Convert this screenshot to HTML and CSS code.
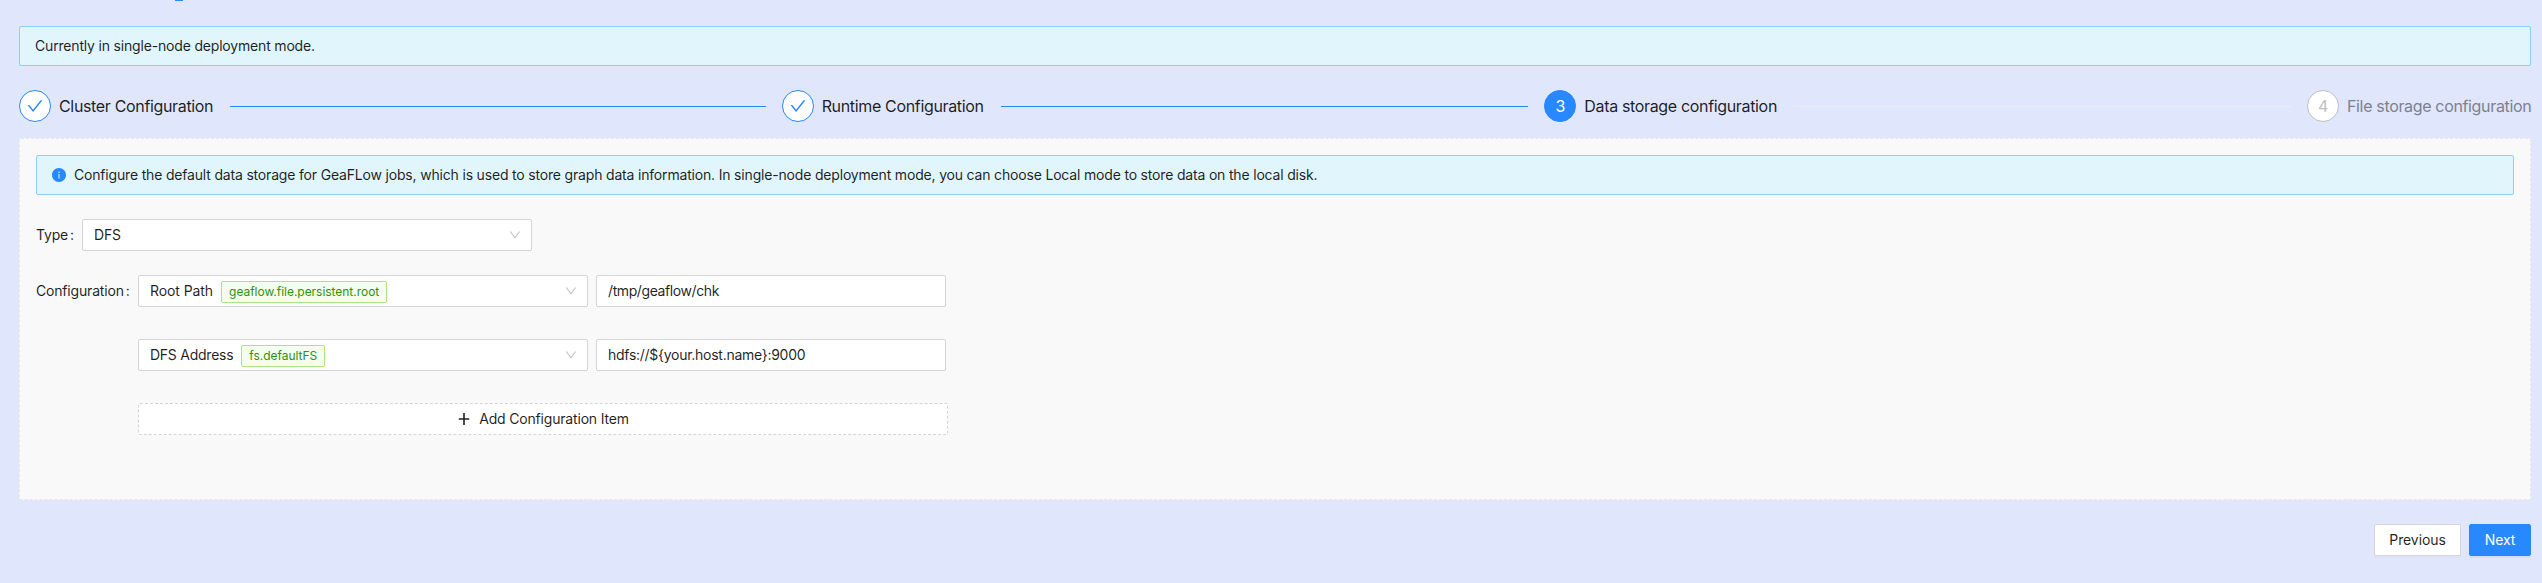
FILE: index.html
```html
<!DOCTYPE html>
<html lang="en">
<head>
<meta charset="utf-8">
<title>Cluster setup</title>
<link rel="stylesheet" href="styles.css">
</head>
<body>
<main class="page">
  <span class="accent"></span>
  <div class="alert"><span class="t-mode">Currently in single-node deployment mode.</span></div>

  <ol class="steps">
    <li class="step done">
      <span class="step-icon"><svg viewBox="64 64 896 896" width="16" height="16" fill="currentColor"><path d="M912 190h-69.900c-9.800 0-19.100 4.500-25.100 12.200L404.700 724.500 207 474a32 32 0 00-25.100-12.200H112c-6.700 0-10.400 7.700-6.300 12.900l273.900 347c12.800 16.200 37.400 16.200 50.300 0l488.400-618.900c4.100-5.100.4-12.800-6.300-12.800z"/></svg></span>
      <span class="step-title t-cluster">Cluster Configuration</span><span class="step-line"></span>
    </li>
    <li class="step done">
      <span class="step-icon"><svg viewBox="64 64 896 896" width="16" height="16" fill="currentColor"><path d="M912 190h-69.900c-9.800 0-19.100 4.500-25.100 12.200L404.700 724.500 207 474a32 32 0 00-25.100-12.200H112c-6.700 0-10.400 7.700-6.300 12.900l273.900 347c12.800 16.200 37.400 16.200 50.300 0l488.400-618.900c4.100-5.100.4-12.800-6.300-12.800z"/></svg></span>
      <span class="step-title t-runtime">Runtime Configuration</span><span class="step-line"></span>
    </li>
    <li class="step active">
      <span class="step-icon">3</span>
      <span class="step-title t-data">Data storage configuration</span><span class="step-line"></span>
    </li>
    <li class="step wait">
      <span class="step-icon">4</span>
      <span class="step-title t-file">File storage configuration</span>
    </li>
  </ol>

  <section class="panel">
    <div class="alert">
      <svg class="info" viewBox="64 64 896 896" width="14" height="14" fill="currentColor"><path d="M512 64C264.600 64 64 264.600 64 512s200.600 448 448 448 448-200.600 448-448S759.400 64 512 64zm32 664c0 4.400-3.600 8-8 8h-48c-4.400 0-8-3.600-8-8V456c0-4.400 3.600-8 8-8h48c4.400 0 8 3.600 8 8v272zm-32-344a48.010 48.010 0 010-96 48.010 48.010 0 010 96z"/></svg>
      <span class="t-info">Configure the default data storage for GeaFLow jobs, which is used to store graph data information. In single-node deployment mode, you can choose Local mode to store data on the local disk.</span>
    </div>

    <div class="row">
      <span class="label label-type"><span class="t-type">Type</span><span class="colon">:</span></span>
      <div class="select"><span>DFS</span>
        <svg class="arrow" viewBox="64 64 896 896" width="12" height="12" fill="currentColor"><path d="M884 256h-75c-5.100 0-9.900 2.500-12.900 6.600L512 654.200 227.900 262.600c-3-4.100-7.800-6.600-12.900-6.600h-75c-6.500 0-10.300 7.400-6.500 12.700l352.600 486.100c12.800 17.600 39 17.600 51.700 0l352.600-486.100c3.900-5.300.1-12.700-6.400-12.700z"/></svg></div>
    </div>

    <div class="row">
      <span class="label label-config"><span class="t-config">Configuration</span><span class="colon">:</span></span>
      <div class="items">
        <div class="item">
          <div class="select"><span class="t-root">Root Path</span><span class="tag tag-root">geaflow.file.persistent.root</span>
            <svg class="arrow" viewBox="64 64 896 896" width="12" height="12" fill="currentColor"><path d="M884 256h-75c-5.100 0-9.900 2.500-12.900 6.600L512 654.200 227.900 262.600c-3-4.100-7.800-6.600-12.900-6.600h-75c-6.500 0-10.300 7.400-6.500 12.700l352.600 486.100c12.800 17.600 39 17.600 51.700 0l352.600-486.100c3.900-5.300.1-12.700-6.400-12.700z"/></svg></div>
          <div class="input"><span class="t-path">/tmp/geaflow/chk</span></div>
        </div>
        <div class="item">
          <div class="select"><span class="t-dfs">DFS Address</span><span class="tag tag-fs">fs.defaultFS</span>
            <svg class="arrow" viewBox="64 64 896 896" width="12" height="12" fill="currentColor"><path d="M884 256h-75c-5.100 0-9.900 2.500-12.900 6.600L512 654.200 227.900 262.600c-3-4.100-7.800-6.600-12.900-6.600h-75c-6.500 0-10.300 7.400-6.500 12.700l352.600 486.100c12.800 17.600 39 17.600 51.700 0l352.600-486.100c3.900-5.300.1-12.700-6.400-12.700z"/></svg></div>
          <div class="input"><span class="t-host">hdfs://${your.host.name}:9000</span></div>
        </div>
        <button class="add">
          <svg viewBox="0 0 14 14" width="14" height="14" fill="currentColor"><path d="M6.200 1h1.600v12h-1.600zM1.800 6.200h10.400v1.600H1.800z"/></svg>
          <span class="t-add">Add Configuration Item</span>
        </button>
      </div>
    </div>
  </section>

  <footer class="actions">
    <button class="btn prev"><span class="t-prev">Previous</span></button>
    <button class="btn next"><span class="t-next">Next</span></button>
  </footer>
</main>
</body>
</html>
```
FILE: styles.css
```css
* { box-sizing: border-box; }
body {
  margin: 0;
  min-height: 583px;
  background: #e0e6fc;
  color: rgba(0, 0, 0, 0.88);
  font: 14px/22px Inter, "Liberation Sans", sans-serif;
  letter-spacing: -0.18px;
}
.page { padding: 26px 11px 0 19px; white-space: nowrap; }
.accent {
  position: absolute;
  left: 175px;
  top: 0;
  width: 8px;
  height: 1px;
  background: #2888ff;
}
.alert {
  display: flex;
  align-items: center;
  height: 40px;
  padding: 0 15px;
  border: 1px solid #8acfff;
  border-radius: 2px;
  background: #e1f5fd;
}
.info { margin-right: 8px; color: #2888ff; }

.steps {
  display: flex;
  gap: 16px;
  margin: 24px 0 16px;
  padding: 0;
  list-style: none;
  font-size: 16px;
  line-height: 32px;
  letter-spacing: -0.34px;
}
.step { display: flex; flex: none; align-items: center; width: 746.67px; }
.step:last-child { width: auto; }
.step-icon {
  display: flex;
  flex: none;
  align-items: center;
  justify-content: center;
  width: 32px;
  height: 32px;
  margin-right: 8px;
  border: 1px solid #2888ff;
  border-radius: 50%;
  background: #fff;
  color: #2888ff;
}
.step-line { flex: 1; height: 1px; margin-top: 1px; margin-left: 17px; background: #2888ff; }
.active .step-icon { background: #2888ff; color: #fff; }
.active .step-line { background: #ececf2; }
.wait .step-icon { border-color: #bfbfbf; color: #bfbfbf; }
.wait .step-title { color: #7d818e; }

.panel {
  height: 362px;
  padding: 16px;
  border: 1px dashed #e6e6e8;
  border-radius: 2px;
  background: #f9f9f9;
}
.row { display: flex; align-items: flex-start; margin-top: 24px; }
.label { display: flex; flex: none; height: 32px; align-items: center; }
.label-type { width: 46px; }
.label-config { width: 102px; }
.colon { margin-left: 2px; }
.items { display: flex; flex-direction: column; gap: 32px; }
.item { display: flex; gap: 8px; }
.select, .input {
  display: flex;
  align-items: center;
  width: 450px;
  height: 32px;
  padding: 0 10px 0 11px;
  border: 1px solid #d5d5d5;
  border-radius: 2px;
  background: #fff;
}
.input { width: 350px; }
.t-root { letter-spacing: -0.08px; }
.t-path { letter-spacing: -0.4px; }
.t-host { letter-spacing: -0.27px; }
.t-dfs { letter-spacing: -0.25px; }
.arrow { margin-left: auto; color: #bfbfbf; }
.tag {
  height: 22px;
  margin-top: 1px;
  margin-left: 8px;
  padding: 0 7px;
  border: 1px solid #abe580;
  border-radius: 2px;
  background: #f6ffed;
  color: #2f9010;
  font-size: 12px;
  line-height: 20px;
  letter-spacing: -0.03px;
}
.tag-root { width: 166px; }
.tag-fs { width: 84px; }
button { font: inherit; letter-spacing: inherit; color: inherit; }
.add {
  display: flex;
  align-items: center;
  justify-content: center;
  gap: 8px;
  width: 810px;
  height: 32px;
  padding: 0;
  border: 1px dashed #d5d5d5;
  border-radius: 2px;
  background: #fff;
}
.actions { display: flex; justify-content: flex-end; gap: 8px; margin-top: 24px; }
.btn {
  width: 87px;
  height: 32px;
  padding: 0;
  border: 1px solid #d5d5d5;
  border-radius: 2px;
  background: #fff;
  letter-spacing: -0.1px;
  box-shadow: 0 2px 0 rgba(0, 0, 0, 0.016);
}
.next { width: 62px; border-color: #2888ff; background: #2888ff; color: #fff; box-shadow: 0 2px 0 rgba(0, 0, 0, 0.045); }
```
